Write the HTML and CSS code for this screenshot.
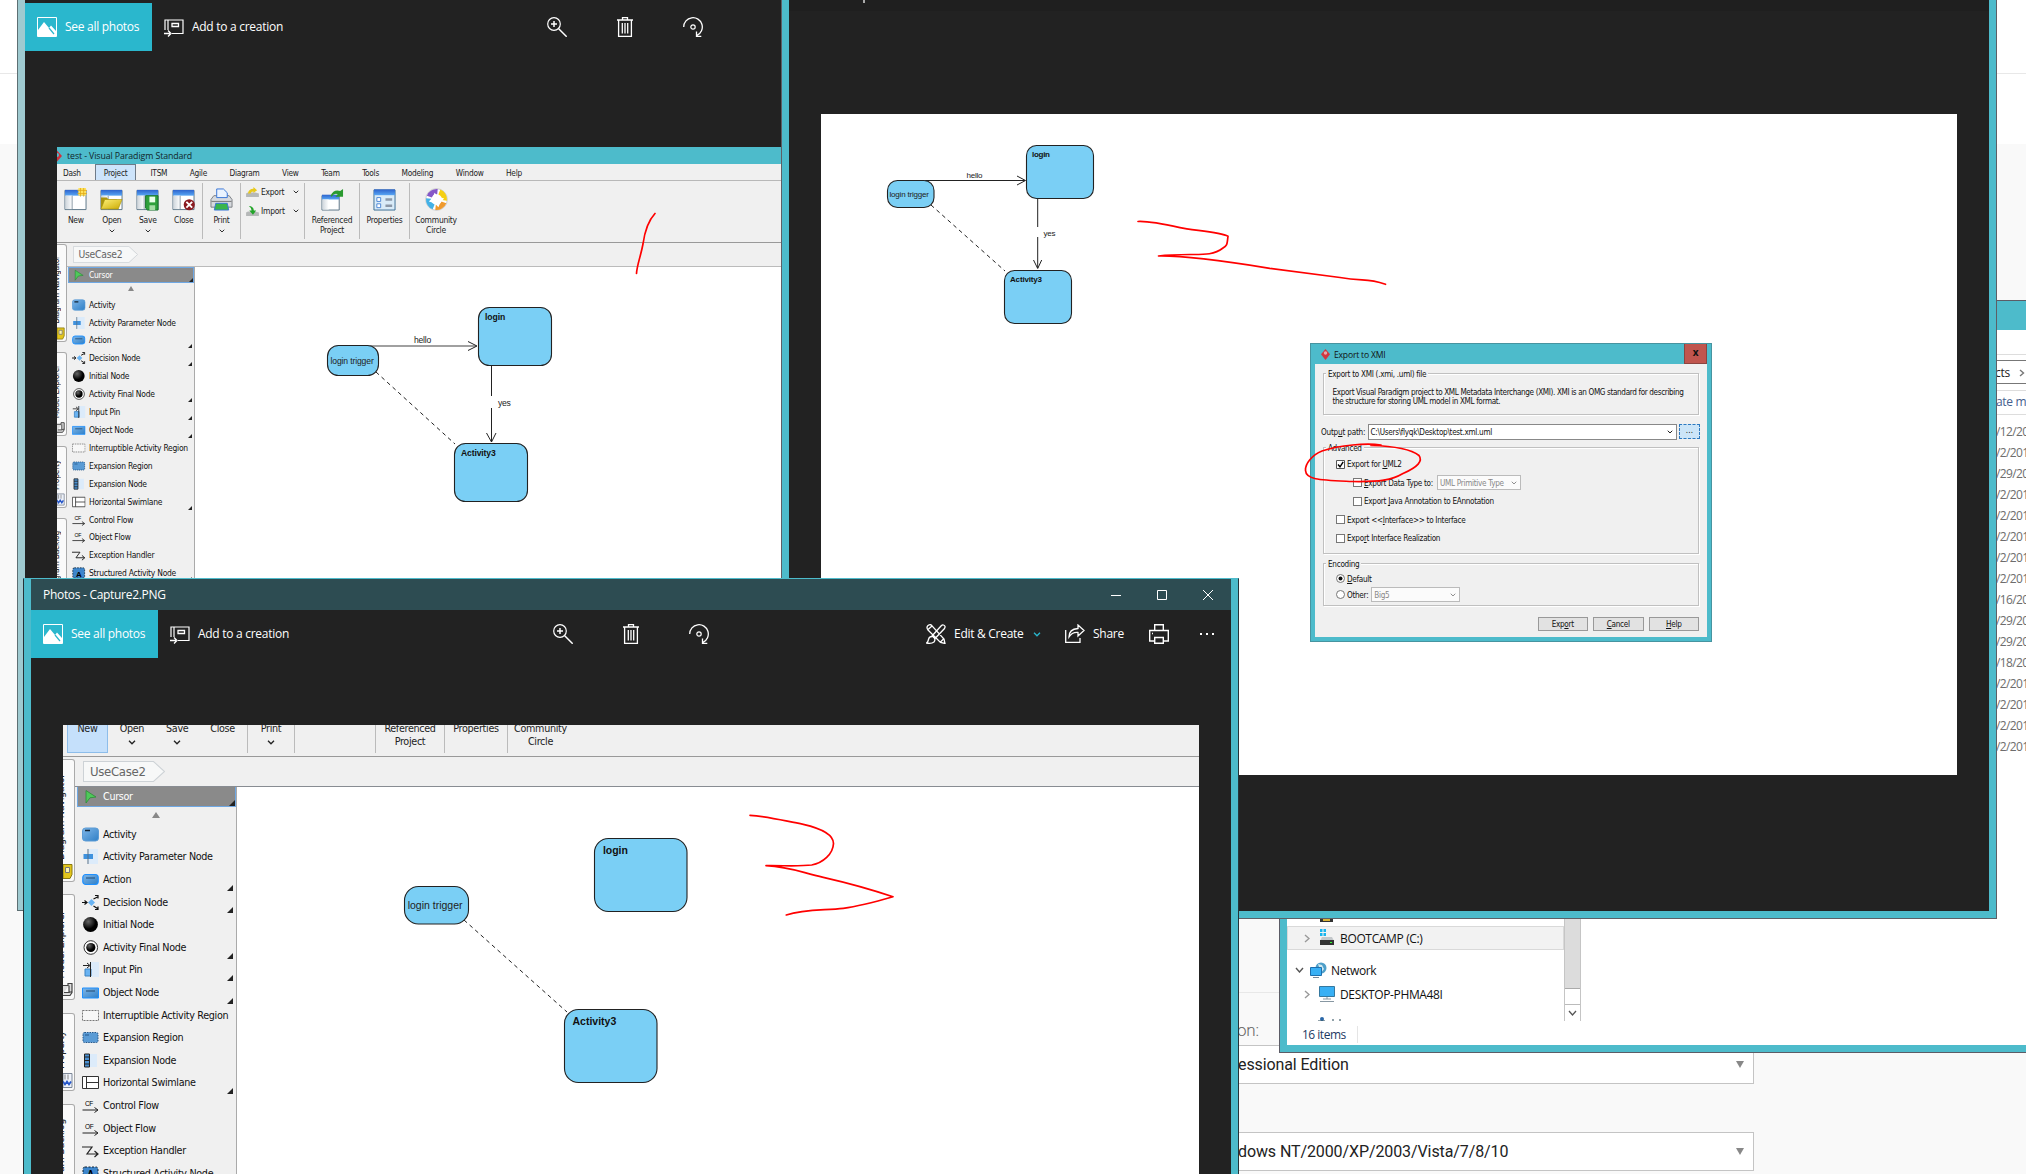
FILE: index.html
```html
<!DOCTYPE html>
<html lang="en">
<head>
<meta charset="utf-8">
<title>Desktop</title>
<link rel="stylesheet" href="styles.css">
</head>
<body>
<svg class="defs" width="0" height="0">
  <defs>
    <linearGradient id="blue" x1="0" y1="0" x2="1" y2="1"><stop offset="0" stop-color="#7fb6e8"/><stop offset="1" stop-color="#2f7fc6"/></linearGradient>
    <linearGradient id="bar" x1="0" y1="0" x2="0" y2="1"><stop offset="0" stop-color="#2d63cc"/><stop offset="1" stop-color="#58a6f4"/></linearGradient>
    <linearGradient id="pane" x1="0" y1="0" x2="1" y2="0"><stop offset="0" stop-color="#cfd6dc"/><stop offset="1" stop-color="#fff"/></linearGradient>
    <radialGradient id="ball" cx=".35" cy=".3"><stop offset="0" stop-color="#666"/><stop offset="1" stop-color="#000"/></radialGradient>
    <linearGradient id="gold" x1="0" y1="0" x2="1" y2="1"><stop offset="0" stop-color="#fff27a"/><stop offset="1" stop-color="#c9a800"/></linearGradient>
  </defs>
  <symbol id="i-photos" viewBox="0 0 20 20"><path d="M.5.5h19v19H.5z" fill="none" stroke="#fff"/><path d="M1 13l6-8 5 6 2-2.500 5 5.500v5H1z" fill="#fff"/><path d="M12 11l5 6" stroke="#2ab7cd" stroke-width="1.200"/></symbol>
  <symbol id="i-add" viewBox="0 0 20 20"><path d="M1 13V3h18v13.500H8M4 3v10" fill="none" stroke="#fff" stroke-width="1.200"/><path d="M8 6.500h6.500v3H8zM0 16.500h6M4 13.500l3 3-3 3" fill="none" stroke="#fff" stroke-width="1.300"/></symbol>
  <symbol id="i-zoom" viewBox="0 0 20 20"><path d="M4 7h6M7 4v6M11.700 11.700l8 8" stroke="#fff" stroke-width="1.500" fill="none"/><circle cx="7" cy="7" r="6.300" fill="none" stroke="#fff" stroke-width="1.200"/></symbol>
  <symbol id="i-trash" viewBox="0 0 20 20"><path d="M2 3h16M7.500 3V.7h5V3M3.600 3v16.300h12.800V3M7.300 6v10.500M10 6v10.500M12.700 6v10.500" fill="none" stroke="#fff" stroke-width="1.300"/></symbol>
  <symbol id="i-rotate" viewBox="0 0 20 20"><path d="M.7 10a9.300 9.300 0 1 1 13.300 8.400M13.500 14.500v4.800h4.800" fill="none" stroke="#fff" stroke-width="1.300"/><circle cx="10" cy="10" r="2.200" fill="none" stroke="#fff" stroke-width="1.200"/></symbol>
  <symbol id="i-edit" viewBox="0 0 20 20"><path d="M2 1.500q3-2 4.500 1L18 15l1 4.500-4.500-1L2 6Q0 3.500 2 1.500zM2 5.500L6 2M14.500 18l3-3M17.500 1q2.500 1 1 3.500L9 14.500 6 12l9-10q1.500-1.500 2.500-1zM6 12.500q-3 0-3.500 3-.5 2.500-2 3.500 5 1 7.500-1 1.500-2 .5-3.500" fill="none" stroke="#fff" stroke-width="1.300"/></symbol>
  <symbol id="i-share" viewBox="0 0 20 20"><path d="M.7 6v12.300H15V14M4 13q0-8 9-8.500V1l6 5.500-6 5.500V8.500Q7 8 4 13z" fill="none" stroke="#fff" stroke-width="1.300"/></symbol>
  <symbol id="i-print" viewBox="0 0 20 20"><path d="M5.700 6.500V.7h8.600v5.800M5 17H.7V6.500h18.600V17H15M5.700 13.500h8.600v5.800H5.700zM3 9.500h1" fill="none" stroke="#fff" stroke-width="1.400"/></symbol>
  <symbol id="i-chev" viewBox="0 0 8 5"><path d="M1 .8l3 3 3-3" fill="none" stroke="currentColor" stroke-width="1.300"/></symbol>

  <symbol id="r-win" viewBox="0 0 24 24"><path d="M1 2.500h22v20H1z" fill="#fff" stroke="#5b7486"/><path d="M1 2h22v6H1z" fill="url(#bar)"/><path d="M1.500 8h7v14h-7z" fill="url(#pane)"/><path d="M8.500 8v14" stroke="#8b9aa5"/></symbol>
  <symbol id="r-new" viewBox="0 0 24 24"><use href="#r-win"/><path d="M15 0h8v8h-8z" fill="#ffe25c"/><path d="M14 2.500h10M14 5.800h10M17.200 0v9M20.500 0v9" stroke="#e0a818" stroke-width=".8"/></symbol>
  <symbol id="r-open" viewBox="0 0 24 24"><use href="#r-win"/><path d="M1 21V10h6l2 2h9" fill="#a89410"/><path d="M5 12h18l-4 10H1z" fill="url(#gold)" stroke="#a08c00" stroke-width=".6"/></symbol>
  <symbol id="r-save" viewBox="0 0 24 24"><use href="#r-win"/><path d="M10 8h13v15H12l-2-2z" fill="#2fa03c" stroke="#14702a"/><path d="M14 9h6v6h-6z" fill="#eaffea"/><path d="M14 18h6v5h-6z" fill="#a5dca5"/></symbol>
  <symbol id="r-close" viewBox="0 0 24 24"><use href="#r-win"/><circle cx="18" cy="17.500" r="5.800" fill="#8a1a20"/><path d="M15 14.500l6 6M21 14.500l-6 6" stroke="#fff" stroke-width="2"/></symbol>
  <symbol id="r-print" viewBox="0 0 24 24"><path d="M4 8h16l3 4v8H1v-8z" fill="#d7dade" stroke="#7b8085"/><path d="M7 10V1h7l4 4v5z" fill="#eaf3ff" stroke="#3574d6"/><path d="M1.500 14h21" stroke="#777"/><path d="M6 16h12l1.500 7h-15z" fill="#39b54a" stroke="#3574d6"/></symbol>
  <symbol id="r-ref" viewBox="0 0 24 24"><path d="M1 8h18v15H1z" fill="#fff" stroke="#5b7486"/><path d="M1 7h18v5H1z" fill="url(#bar)"/><path d="M1.500 12H8v10.500H1.500z" fill="url(#pane)"/><path d="M10 8Q13 1 20 3l3-2v8h-8l2.500-2.500Q14 5 11 9z" fill="#2a9a30"/></symbol>
  <symbol id="r-prop" viewBox="0 0 24 24"><path d="M1 2h22v21H1z" fill="#d9ebf8" stroke="#3b6d94"/><path d="M1 1.500h22v6H1z" fill="url(#bar)"/><path d="M4 10h4v4H4zM4 16.500h4v4H4z" fill="#fff" stroke="#4b86d6"/><path d="M13 12h7M13 18.500h7" stroke="#8b98a8" stroke-width="2.500"/></symbol>
  <symbol id="r-comm" viewBox="0 0 24 24"><circle cx="12" cy="12" r="11.300" fill="#fff" stroke="#bbb" stroke-width=".8"/><g fill="none" stroke-width="5.500"><path d="M4.500 9A8.300 8.300 0 0 1 13 3.800" stroke="#8558c8"/><path d="M15 4.200A8.300 8.300 0 0 1 20.200 13" stroke="#f5cf12"/><path d="M19.700 15A8.300 8.300 0 0 1 11 20.200" stroke="#ef9a2e"/><path d="M9 19.700A8.300 8.300 0 0 1 3.800 11" stroke="#43b1e6"/></g><path d="M10 5l4 4 6 2-4 4-2 5-4-4-6-2 4-4z" fill="#fff"/></symbol>
  <symbol id="r-exp" viewBox="0 0 14 12"><path d="M0 7l2-1h8l4 1v4H0z" fill="#b5b8b8"/><path d="M2 7q1-5 6-5V0l4 3.500L8 6.500V5Q5 5 5 7z" fill="#e8c91c"/></symbol>
  <symbol id="r-imp" viewBox="0 0 14 12"><path d="M0 7l2-1h8l4 1v4H0z" fill="#b5b8b8"/><path d="M3 0q5 0 5.500 5H11L7.500 9.500 3.500 5H6Q6 2 3 0z" fill="#23a52a"/></symbol>

  <symbol id="p-cursor" viewBox="0 0 17 15"><path d="M4 1.500l10 6.500-6 .8L4 14z" fill="#4fc95a" stroke="#2c8c36" stroke-width=".8"/></symbol>
  <symbol id="p-activity" viewBox="0 0 17 15"><rect x=".5" y="1" width="16" height="13" rx="3" fill="url(#blue)" stroke="#5b9bd5"/><path d="M3 3.500h5" stroke="#123" stroke-width="1.500"/></symbol>
  <symbol id="p-param" viewBox="0 0 17 15"><path d="M7 0h9v15H7z" fill="#dcebfa"/><path d="M1.500 5h9.500v5H1.500z" fill="#3f92de"/><path d="M6 0v15" stroke="#53718c"/></symbol>
  <symbol id="p-action" viewBox="0 0 17 15"><rect x=".8" y="2.500" width="15.400" height="10" rx="3" fill="url(#blue)" stroke="#1e90ff" stroke-width="1.200"/><path d="M4 6h9" stroke="#234a70"/></symbol>
  <symbol id="p-decision" viewBox="0 0 17 15"><path d="M0 7.500h4M2.500 5.500l2.500 2-2.500 2M11.500 4l4-2M13 .5h3v3M11.500 11l4 2.500M13 14.500h3v-3" fill="none" stroke="#111" stroke-width="1.200"/><path d="M9.500 4l3.500 3.500L9.500 11 6 7.500z" fill="#69b3f2"/></symbol>
  <symbol id="p-initial" viewBox="0 0 17 15"><circle cx="8.500" cy="7.500" r="7.400" fill="url(#ball)"/></symbol>
  <symbol id="p-final" viewBox="0 0 17 15"><circle cx="8.800" cy="7.500" r="6.800" fill="#fff" stroke="#333"/><circle cx="8.800" cy="7.500" r="4.600" fill="url(#ball)"/></symbol>
  <symbol id="p-pin" viewBox="0 0 17 15"><path d="M8 0h9v15H8z" fill="#dcebfa"/><path d="M3 7h6v7H3z" fill="#69b3f2" stroke="#3c82c0"/><path d="M1 3.500h6M5 1l3 2.500L5 6M8.500 0v15" fill="none" stroke="#222"/></symbol>
  <symbol id="p-object" viewBox="0 0 17 15"><path d="M.5 3h16v10H.5z" fill="url(#blue)" stroke="#1e90ff"/><path d="M4 6h9" stroke="#234a70"/></symbol>
  <symbol id="p-region" viewBox="0 0 17 15"><path d="M.5 2.500h16v10H.5z" fill="#f7f7f7" stroke="#777" stroke-dasharray="2 1"/></symbol>
  <symbol id="p-expreg" viewBox="0 0 17 15"><rect x="1" y="2.500" width="15" height="10" rx="1.500" fill="#5a9bd5" stroke="#24568a" stroke-dasharray="1.500 1"/><path d="M3 5h4" stroke="#24568a"/></symbol>
  <symbol id="p-expnode" viewBox="0 0 17 15"><path d="M6 1h9v13H6z" fill="#dcebfa"/><path d="M2.500 1h5v13h-5z" fill="#4a90d2" stroke="#222"/><path d="M2.500 4h5M2.500 7.500h5M2.500 11h5" stroke="#222"/></symbol>
  <symbol id="p-swim" viewBox="0 0 17 15"><path d="M.5 1.500h16v12H.5zM4.500 1.500v12M4.500 7.500h12" fill="#fff" stroke="#333"/></symbol>
  <symbol id="p-flow" viewBox="0 0 17 15"><path d="M.5 12h15M12.500 9.500l3.500 2.500-3.500 2.500" fill="none" stroke="#222"/></symbol>
  <symbol id="p-exc" viewBox="0 0 17 15"><path d="M0 4h10L5 11h11M12.500 8l3.500 3-3.500 3" fill="none" stroke="#222" stroke-width="1.200"/></symbol>
  <symbol id="p-struct" viewBox="0 0 17 15"><rect x="1" y="1" width="15" height="13" rx="2" fill="#3d86cc" stroke="#123" stroke-dasharray="2 1.500"/></symbol>
  <symbol id="t-diagram" viewBox="0 0 10 16"><path d="M0 1h9v10l-2 4H0z" fill="#e3c51b" stroke="#8a7a10"/><path d="M2.500 4h4v5h-4z" fill="#fff7b0" stroke="#777"/></symbol>
  <symbol id="t-model" viewBox="0 0 10 16"><path d="M0 4h5V2h4v9l-2 3H0M1 11h5V4M6 11l3-1" fill="#ddd" stroke="#444" stroke-width="1.200"/></symbol>
  <symbol id="t-prop" viewBox="0 0 10 16"><path d="M0 1h9v14H0z" fill="#eef2fa" stroke="#7c8797"/><path d="M2 2v5M5 2v5" stroke="#888"/><path d="M0 9l2 3 2-3 2 3 2-3" fill="none" stroke="#2656c8" stroke-width="1.800"/></symbol>
</svg>

<div class="desktop">
  <main class="site">
    <div class="site-head"></div>
    <div class="site-nav"></div>
    <form class="site-form">
      <div class="site-rule"></div>
      <label class="site-label">on:</label>
      <div class="site-select">essional Edition<i></i></div>
      <div class="site-select site-second">dows NT/2000/XP/2003/Vista/7/8/10<i></i></div>
    </form>
  </main>

  <section class="win explorer">
    <div class="ex-title"></div>
    <div class="ex-tabs"></div>
    <div class="ex-addr"><span>cts</span><svg width="6" height="8"><path d="M1 1l3.500 3L1 7" fill="none" stroke="#777" stroke-width="1.400"/></svg></div>
    <div class="ex-body">
      <div class="ex-tree">
        <svg class="ex-video" width="13" height="5"><path d="M0 0h13v4H0z" fill="#333"/><path d="M3 0h7v3H3z" fill="#d9b43a"/></svg>
        <div class="ex-row ex-sel"><svg class="tw" width="6" height="9"><path d="M1 1l4 3.500-4 3.500" fill="none" stroke="#999" stroke-width="1.400"/></svg><svg width="16" height="20"><path d="M1 1h2.500v3H1zM4.500 1H7v3H4.500zM1 5h2.500v3H1zM4.500 5H7v3H4.500z" fill="#19b5ee"/><path d="M3 9h10l2 4H1z" fill="#c4c8cb"/><path d="M1 12h14v5H1z" fill="#333"/><path d="M11 14.500h2" stroke="#3f3"/></svg><span>BOOTCAMP (C:)</span></div>
        <div class="ex-row ex-net"><svg class="tw" width="9" height="6"><path d="M1 1l3.500 4L8 1" fill="none" stroke="#555" stroke-width="1.400"/></svg><svg width="17" height="16"><circle cx="11" cy="6" r="5.500" fill="#4e9fc9"/><path d="M8 2l4 1 2 4-3 4" fill="#cfe8ef"/><path d="M.5 5.500h11v8H.5z" fill="#38b0f5" stroke="#1d6fae"/><path d="M3 15.500h6" stroke="#789"/></svg><span>Network</span></div>
        <div class="ex-row ex-pc"><svg class="tw" width="6" height="9"><path d="M1 1l4 3.500-4 3.500" fill="none" stroke="#999" stroke-width="1.400"/></svg><svg width="16" height="16"><path d="M.5.500h15v10H.5z" fill="#38b0f5" stroke="#35789f"/><path d="M8 11v2M4 13h8M1 15.500h14" stroke="#8797a2"/></svg><span>DESKTOP-PHMA48I</span></div>
        <svg class="ex-cut" width="24" height="4"><circle cx="4" cy="2" r="2" fill="#2a67a8"/><path d="M0 4h7M14 3h2M21 3h2" stroke="#245"/></svg>
      </div>
      <div class="ex-scroll"><div class="thumb"></div><div class="gap"></div><div class="down"><svg width="9" height="6"><path d="M1 1l3.500 4L8 1" fill="none" stroke="#555" stroke-width="1.300"/></svg></div></div>
      <div class="ex-files">
        <div class="ex-col">ate m</div>
        <div>/12/20</div><div>/2/201</div><div>/29/20</div><div>/2/201</div><div>/2/201</div><div>/2/201</div><div>/2/201</div><div>/2/201</div><div>/16/20</div><div>/29/20</div><div>/29/20</div><div>/18/20</div><div>/2/201</div><div>/2/201</div><div>/2/201</div><div>/2/201</div>
      </div>
    </div>
    <div class="ex-status"><span>16 items</span></div>
  </section>

  <section class="win photos-a">
    <div class="ph-bar">
      <div class="ph-all"><svg width="20" height="20"><use href="#i-photos"/></svg><span>See all photos</span></div>
      <div class="ph-add"><svg width="20" height="20"><use href="#i-add"/></svg><span>Add to a creation</span></div>
      <div class="ph-mid"><svg width="20" height="20"><use href="#i-zoom"/></svg><svg width="20" height="20"><use href="#i-trash"/></svg><svg width="20" height="20"><use href="#i-rotate"/></svg></div>
    </div>
    <div class="shot vp vp-a">
      <div class="vp-title"><svg width="6" height="12"><path d="M-5 6l5-5.500L5 6 0 11.500z" fill="#d22f3a"/><circle cx="0" cy="5" r="2" fill="#4dbbcb"/></svg><span>test - Visual Paradigm Standard</span></div>
      <nav class="vp-menu"><span>Dash</span><span class="on">Project</span><span>ITSM</span><span>Agile</span><span>Diagram</span><span>View</span><span>Team</span><span>Tools</span><span>Modeling</span><span>Window</span><span>Help</span></nav>
      <div class="vp-ribbon">
        <div class="grp g4">
          <div class="rb"><svg><use href="#r-new"/></svg>New</div>
          <div class="rb"><svg><use href="#r-open"/></svg>Open<svg class="cv"><use href="#i-chev"/></svg></div>
          <div class="rb"><svg><use href="#r-save"/></svg>Save<svg class="cv"><use href="#i-chev"/></svg></div>
          <div class="rb"><svg><use href="#r-close"/></svg>Close</div>
        </div>
        <div class="grp gp"><div class="rb"><svg><use href="#r-print"/></svg>Print<svg class="cv"><use href="#i-chev"/></svg></div></div>
        <div class="grp gx"><div class="rl"><svg><use href="#r-exp"/></svg>Export<svg class="cv"><use href="#i-chev"/></svg></div><div class="rl"><svg><use href="#r-imp"/></svg>Import<svg class="cv"><use href="#i-chev"/></svg></div></div>
        <div class="grp gr"><div class="rb"><svg><use href="#r-ref"/></svg>Referenced<br>Project</div></div>
        <div class="grp go"><div class="rb"><svg><use href="#r-prop"/></svg>Properties</div></div>
        <div class="grp gc"><div class="rb"><svg><use href="#r-comm"/></svg>Community<br>Circle</div></div>
      </div>
      <div class="vp-main">
        <div class="vp-tabs">
          <div class="tab t1"><span>Diagram Navigator</span><svg><use href="#t-diagram"/></svg></div>
          <div class="tab t2"><span>Model Explorer</span><svg><use href="#t-model"/></svg></div>
          <div class="tab t3"><span>Property</span><svg><use href="#t-prop"/></svg></div>
          <div class="tab t4"><span>Diagram Backlog</span></div>
        </div>
        <div class="vp-work">
          <div class="vp-crumb"><svg viewBox="0 0 82 20" preserveAspectRatio="none"><path d="M.5.500h70l11 9.500-11 9.500H.5z" fill="#f7f8f8" stroke="#cdd2d6"/></svg><span>UseCase2</span></div>
          <div class="vp-split">
            <div class="vp-pal">
              <div class="pr cur more"><svg><use href="#p-cursor"/></svg>Cursor</div>
              <div class="up"></div>
              <div class="pr"><svg><use href="#p-activity"/></svg>Activity</div>
              <div class="pr"><svg><use href="#p-param"/></svg>Activity Parameter Node</div>
              <div class="pr more"><svg><use href="#p-action"/></svg>Action</div>
              <div class="pr more"><svg><use href="#p-decision"/></svg>Decision Node</div>
              <div class="pr"><svg><use href="#p-initial"/></svg>Initial Node</div>
              <div class="pr more"><svg><use href="#p-final"/></svg>Activity Final Node</div>
              <div class="pr more"><svg><use href="#p-pin"/></svg>Input Pin</div>
              <div class="pr more"><svg><use href="#p-object"/></svg>Object Node</div>
              <div class="pr"><svg><use href="#p-region"/></svg>Interruptible Activity Region</div>
              <div class="pr"><svg><use href="#p-expreg"/></svg>Expansion Region</div>
              <div class="pr"><svg><use href="#p-expnode"/></svg>Expansion Node</div>
              <div class="pr more"><svg><use href="#p-swim"/></svg>Horizontal Swimlane</div>
              <div class="pr"><svg viewBox="0 0 17 15"><use href="#p-flow"/><text class="fl" x="3" y="8">CF</text></svg>Control Flow</div>
              <div class="pr"><svg viewBox="0 0 17 15"><use href="#p-flow"/><text class="fl" x="3" y="8">OF</text></svg>Object Flow</div>
              <div class="pr"><svg><use href="#p-exc"/></svg>Exception Handler</div>
              <div class="pr more"><svg viewBox="0 0 17 15"><use href="#p-struct"/><text class="st" x="5" y="12">A</text></svg>Structured Activity Node</div>
            </div>
            <svg class="canvas" viewBox="195 267 586 312" width="586" height="312">
              <path d="M370 346H476" stroke="#a0a0a0" stroke-width="2"/>
              <path d="M468 341.500l9 4.500-9 4.500M491.500 365v31M491.500 408v34M486.500 433l5 9 4.500-9" class="ln"/>
              <path d="M376 372L455 444" class="ln dash"/>
              <rect x="327.500" y="345.500" width="51" height="30" rx="11" class="nd"/><rect x="478.500" y="307.500" width="73" height="58" rx="11" class="nd"/><rect x="454.500" y="443.500" width="73" height="58" rx="11" class="nd"/>
              <g class="dt" font-size="8.600"><text x="330.500" y="363.500" textLength="43">login trigger</text><text x="414" y="343" textLength="17">hello</text><text x="498" y="405.500" textLength="12.500">yes</text><text x="485" y="320" textLength="20" class="b">login</text><text x="461" y="455.500" textLength="34.500" class="b">Activity3</text></g>
            </svg>
          </div>
        </div>
      </div>
    </div>
    <svg class="ink-a" viewBox="600 200 100 80" width="100" height="80"><path d="M655 213.500C648 221 644.500 233 643 244 C640.500 257 637 265 636.500 273.500" class="red"/></svg>
  </section>

  <section class="win photos-b">
    <div class="b-bar"><i></i></div>
    <div class="shot shot-b">
      <div class="dialog">
        <header><svg width="9" height="11" viewBox="0 0 9 11"><path d="M4.500 0L9 5.200 4.500 11 0 5.200z" fill="#cf3640"/><circle cx="4.500" cy="4" r="1.700" fill="#e9a7ab"/></svg><span class="d-name">Export to XMI</span><b>x</b></header>
        <div class="dbody">
          <div class="fs f1"><span class="lg">Export to XMI (.xmi, .uml) file</span><p>Export Visual Paradigm project to XML Metadata Interchange (XMI). XMI is an OMG standard for describing<br>the structure for storing UML model in XML format.</p></div>
          <div class="out"><span>Outp<u>u</u>t path:</span><div class="inp">C:\Users\flyqk\Desktop\test.xml.uml<svg width="6" height="4"><use href="#i-chev"/></svg></div><div class="dots">...</div></div>
          <div class="fs f2"><span class="lg">Advanced</span>
            <div class="ck"><svg width="9" height="9"><path d="M.5.500h8v8h-8z" fill="#fff" stroke="#555"/><path d="M2 4.500l2 2.300 3.200-5" fill="none" stroke="#000" stroke-width="1.400"/></svg><span>Export for <u>U</u>ML2</span></div>
            <div class="ck in"><i></i><span><u>E</u>xport Data Type to:</span><div class="sel s1">UML Primitive Type<svg width="6" height="4"><use href="#i-chev"/></svg></div></div>
            <div class="ck in"><i></i><span>Export <u>J</u>ava Annotation to EAnnotation</span></div>
            <div class="ck"><i></i><span>Export &lt;&lt;<u>I</u>nterface&gt;&gt; to Interface</span></div>
            <div class="ck"><i></i><span>Expo<u>r</u>t Interface Realization</span></div>
          </div>
          <div class="fs f3"><span class="lg">Encoding</span>
            <div class="rd"><svg width="9" height="9"><circle cx="4.500" cy="4.500" r="4" fill="#fff" stroke="#777"/><circle cx="4.500" cy="4.500" r="2" fill="#111"/></svg><span><u>D</u>efault</span></div>
            <div class="rd"><svg width="9" height="9"><circle cx="4.500" cy="4.500" r="4" fill="#fff" stroke="#777"/></svg><span>Other:</span><div class="sel s2">Big5<svg width="6" height="4"><use href="#i-chev"/></svg></div></div>
          </div>
          <div class="btns"><div>Exp<u>o</u>rt</div><div><u>C</u>ancel</div><div><u>H</u>elp</div></div>
        </div>
      </div>
      <svg class="over" viewBox="821 114 1136 661" width="1136" height="661">
        <path d="M925 180.500H1025M1017 176l8.500 4.500-8.500 4.500M1037.700 198v29M1037.700 237v31M1033.500 260l4.200 8.500 4-8.500" class="ln"/>
        <path d="M931 205L1005 271" class="ln dash"/>
        <rect x="887.500" y="180.500" width="46.500" height="27" rx="10" class="nd"/><rect x="1026.500" y="145.500" width="67" height="53" rx="10" class="nd"/><rect x="1004.500" y="270.500" width="67" height="53" rx="10" class="nd"/>
        <g class="dt" font-size="8"><text x="889.500" y="196.500" textLength="39.500">login trigger</text><text x="966.500" y="178" textLength="16">hello</text><text x="1043.500" y="235.500" textLength="12">yes</text><text x="1032" y="156.500" textLength="18" class="b">login</text><text x="1010" y="281.500" textLength="32" class="b">Activity3</text></g>
        <path d="M1138 221.500C1148 221 1168 225 1180 227.700S1220 232 1228 236.300C1227 243 1228 245 1223 248C1214 255 1204 254.500 1190 254.500Q1170 254.500 1158.500 256C1180 255.500 1230 262 1269.800 268.300L1340 277.500Q1350 279.500 1362 279.800 T1385.500 284.300" class="red"/>
        <path d="M1381 445C1366 443 1340 445 1322 451 C1312 455 1305 464 1305.500 470.500C1306 480 1320 480 1352 481.500 C1380 482 1392 480 1403 473.500 C1418 467 1423 461 1419 455.500 C1411 449 1390 446 1371 445.500" class="red"/>
      </svg>
    </div>
  </section>

  <section class="win photos-c">
    <header class="ph-title"><span>Photos - Capture2.PNG</span>
      <svg width="102" height="10"><path d="M0 5.500h10M46.500.500h9v9h-9zM92 0l10 10M102 0l-10 10" fill="none" stroke="#fff"/></svg></header>
    <div class="ph-bar">
      <div class="ph-all"><svg width="20" height="20"><use href="#i-photos"/></svg><span>See all photos</span></div>
      <div class="ph-add"><svg width="20" height="20"><use href="#i-add"/></svg><span>Add to a creation</span></div>
      <div class="ph-mid"><svg width="20" height="20"><use href="#i-zoom"/></svg><svg width="20" height="20"><use href="#i-trash"/></svg><svg width="20" height="20"><use href="#i-rotate"/></svg></div>
      <div class="ph-right"><svg width="20" height="20"><use href="#i-edit"/></svg><span class="e">Edit &amp; Create</span><svg class="pc" width="8" height="5"><use href="#i-chev"/></svg><svg width="20" height="20"><use href="#i-share"/></svg><span class="s">Share</span><svg class="pp" width="20" height="20"><use href="#i-print"/></svg><svg width="14" height="2"><path d="M0 0h2v2H0zM6 0h2v2H6zM12 0h2v2h-2z" fill="#fff"/></svg></div>
    </div>
    <div class="shot vp vp-c">
      <div class="vp-ribbon">
        <div class="grp g4">
          <div class="rb hot">New</div>
          <div class="rb">Open<svg class="cv"><use href="#i-chev"/></svg></div>
          <div class="rb">Save<svg class="cv"><use href="#i-chev"/></svg></div>
          <div class="rb">Close</div>
        </div>
        <div class="grp gp"><div class="rb">Print<svg class="cv"><use href="#i-chev"/></svg></div></div>
        <div class="grp gx"></div>
        <div class="grp gr"><div class="rb">Referenced<br>Project</div></div>
        <div class="grp go"><div class="rb">Properties</div></div>
        <div class="grp gc"><div class="rb">Community<br>Circle</div></div>
      </div>
      <div class="vp-main">
        <div class="vp-tabs">
          <div class="tab t1"><span>Diagram Navigator</span><svg><use href="#t-diagram"/></svg></div>
          <div class="tab t2"><span>Model Explorer</span><svg><use href="#t-model"/></svg></div>
          <div class="tab t3"><span>Property</span><svg><use href="#t-prop"/></svg></div>
          <div class="tab t4"><span>Diagram Backlog</span></div>
        </div>
        <div class="vp-work">
          <div class="vp-crumb"><svg viewBox="0 0 82 20" preserveAspectRatio="none"><path d="M.5.500h70l11 9.500-11 9.500H.5z" fill="#f7f8f8" stroke="#cdd2d6"/></svg><span>UseCase2</span></div>
          <div class="vp-split">
            <div class="vp-pal">
              <div class="pr cur more"><svg><use href="#p-cursor"/></svg>Cursor</div>
              <div class="up"></div>
              <div class="pr"><svg><use href="#p-activity"/></svg>Activity</div>
              <div class="pr"><svg><use href="#p-param"/></svg>Activity Parameter Node</div>
              <div class="pr more"><svg><use href="#p-action"/></svg>Action</div>
              <div class="pr more"><svg><use href="#p-decision"/></svg>Decision Node</div>
              <div class="pr"><svg><use href="#p-initial"/></svg>Initial Node</div>
              <div class="pr more"><svg><use href="#p-final"/></svg>Activity Final Node</div>
              <div class="pr more"><svg><use href="#p-pin"/></svg>Input Pin</div>
              <div class="pr more"><svg><use href="#p-object"/></svg>Object Node</div>
              <div class="pr"><svg><use href="#p-region"/></svg>Interruptible Activity Region</div>
              <div class="pr"><svg><use href="#p-expreg"/></svg>Expansion Region</div>
              <div class="pr"><svg><use href="#p-expnode"/></svg>Expansion Node</div>
              <div class="pr more"><svg><use href="#p-swim"/></svg>Horizontal Swimlane</div>
              <div class="pr"><svg viewBox="0 0 17 15"><use href="#p-flow"/><text class="fl" x="3" y="8">CF</text></svg>Control Flow</div>
              <div class="pr"><svg viewBox="0 0 17 15"><use href="#p-flow"/><text class="fl" x="3" y="8">OF</text></svg>Object Flow</div>
              <div class="pr"><svg><use href="#p-exc"/></svg>Exception Handler</div>
              <div class="pr more"><svg viewBox="0 0 17 15"><use href="#p-struct"/><text class="st" x="5" y="12">A</text></svg>Structured Activity Node</div>
            </div>
            <svg class="canvas" viewBox="237 787 962 387" width="962" height="387">
              <path d="M464 920L567 1012" class="ln dash"/>
              <rect x="404.500" y="886.500" width="64" height="37.500" rx="14" class="nd"/><rect x="594.500" y="838.500" width="92.500" height="73" rx="14" class="nd"/><rect x="564.500" y="1009.500" width="92.500" height="73" rx="14" class="nd"/>
              <g class="dt" font-size="10.500"><text x="407.700" y="908.500" textLength="54.500">login trigger</text><text x="603" y="854" textLength="24.500" class="b">login</text><text x="572.500" y="1025" textLength="43.500" class="b">Activity3</text></g>
              <path d="M750 815.300C768 816.500 785 821 803.300 824.300C815 827 833.500 832 833.500 843.500C833 854 823 863 811.700 865C800 866.500 785 865.500 766 865.700C790 867 800 872 823.300 877.300S870 889 893 896.700C878 901 860 906 843.300 908.300C825 910.500 805 909 786.300 915" class="red"/>
            </svg>
          </div>
        </div>
      </div>
    </div>
  </section>
</div>
</body>
</html>
```
FILE: styles.css
```css
* { box-sizing: border-box; }
body { margin: 0; font-family: "Open Sans", "Noto Sans", sans-serif; }
svg { display: block; flex: none; }
.defs { position: absolute; }
.desktop { position: relative; width: 2026px; height: 1174px; overflow: hidden; background: #f9f9f9; }
.win { position: absolute; overflow: hidden; }

/* web page behind the windows */
.site-head { height: 74px; background: #fff; border-bottom: 1px solid #e8e8e8; }
.site-nav { height: 70px; background: #fff; }
.site-form { margin-left: 1238px; width: 516px; padding-top: 848px; font-family: Roboto, sans-serif; }
.site-rule { border-top: 1px solid #e8e8e8; height: 20px; }
.site-label { display: block; height: 33px; line-height: 36px; font-size: 17px; color: #666; font-weight: 300; margin-left: -1px; letter-spacing: -.2px; }
.site-select { display: flex; align-items: center; height: 39px; border: 1px solid #c4c4c4; border-left: 0; background: #fff; font-size: 16px; color: #222; white-space: nowrap; letter-spacing: -.1px; }
.site-select i { margin-left: auto; margin-right: 9px; border: 4.500px solid transparent; border-top: 7px solid #888; border-bottom: 0; }
.site-second { margin-top: 48px; }

/* file explorer */
.explorer { left: 1279px; top: 300px; width: 760px; height: 753px; border: 1px solid #5c5c66; border-width: 1px 0 1px 1px; background: #4dbbcb; padding: 0 0 7px 7px; font-size: 12px; display: flex; flex-direction: column; }
.ex-title { height: 29px; }
.ex-tabs { height: 25px; background: #fff; border-bottom: 1px solid #ddd; }
.ex-addr { display: flex; align-items: center; gap: 9px; height: 36px; background: #fff; padding-left: 708px; color: #222; border-bottom: 1px solid #ddd; box-shadow: inset 0 5px #fff, inset 0 6px #777, inset 0 -6px #fff, inset 0 -7px #777; letter-spacing: -.3px; }
.ex-body { flex: 1; display: flex; background: #fff; min-height: 0; }
.ex-tree { width: 277px; padding-top: 527px; letter-spacing: -.35px; overflow: hidden; }
.ex-video { margin-left: 33px; }
.ex-row { display: flex; align-items: center; gap: 5px; height: 24px; white-space: nowrap; color: #111; }
.ex-sel { margin-top: 3px; border: 1px solid #d9d9d9; background: #f2f2f2; padding-left: 16px; }
.ex-row .tw { margin-right: 4px; }
.ex-net { margin-top: 8px; padding-left: 8px; gap: 4px; }
.ex-net .tw { margin-right: 2px; }
.ex-pc { padding-left: 17px; }
.ex-cut { margin: 11px 0 0 31px; }
.ex-scroll { width: 17px; display: flex; flex-direction: column; border: 1px solid #c5c5c5; border-width: 0 1px 1px; background: #fff; height: 631px; }
.thumb { flex: 1; background: #dcdcdc; border-bottom: 1px solid #aaa; }
.gap { height: 15px; }
.down { height: 17px; border-top: 1px solid #bbb; display: flex; align-items: center; justify-content: center; }
.ex-files { padding-left: 414px; color: #6d6d6d; line-height: 21.030px; white-space: nowrap; }
.ex-files > div { padding-left: 1px; letter-spacing: -.65px; }
.ex-files .ex-col { color: #44608e; height: 24px; border-bottom: 1px solid #ddd; margin-bottom: 6px; padding-left: 1px; letter-spacing: -.3px; }
.ex-status { background: #fff; height: 24px; padding: 5px 0 0 15px; color: #1d3a63; line-height: 17px; letter-spacing: -.5px; }
.ex-status span { border-right: 1px solid #e5e5e5; padding-right: 11px; }

/* photo viewer windows */
.photos-a { left: 17px; top: -1px; width: 764px; height: 912px; border: 1px solid #5d6f73; border-right: 0; background: #222; box-shadow: inset 7px 0 #9fcad0, inset 0 -7px #9fcad0; padding: 3px 0 0 7px; }
.photos-b { left: 781px; top: -1px; width: 1216px; height: 920px; border: 1px solid #5d5f66; background: #222; box-shadow: inset 7px 0 #4dbbcb, inset -7px 0 #4dbbcb, inset 0 -7px #4dbbcb; padding: 0 7px; }
.photos-c { left: 23px; top: 578px; width: 1216px; height: 620px; border: 1px solid #253338; border-top: 1px solid #4dbbcb; background: #222; padding: 0 7px; box-shadow: inset 7px 0 #4dbbcb, inset -7px 0 #4dbbcb; }
.b-bar { height: 11px; background: #1f1f1f; padding-left: 74px; }
.b-bar i { display: block; width: 2px; height: 3px; background: #aaa; }
.ph-title { display: flex; justify-content: space-between; align-items: center; height: 31px; background: #2d4c52; color: #fff; font-size: 12px; letter-spacing: -.3px; padding: 0 18px 0 12px; }
.ph-bar { display: flex; align-items: center; height: 48px; color: #fff; font-size: 12px; letter-spacing: -.28px; white-space: nowrap; }
.ph-bar > div { display: flex; align-items: center; }
.ph-bar span { margin-top: -1px; }
.ph-all { width: 127px; height: 48px; background: #2ab7cd; padding-left: 12px; gap: 8px; }
.ph-add { padding-left: 12px; gap: 8px; width: 395px; }
.ph-mid { gap: 48px; }
.ph-right { margin-left: auto; padding-right: 17px; }
.ph-right .e { margin-left: 8px; width: 79px; }
.ph-right .pc { color: #2ab7cd; margin-right: 24px; }
.ph-right .s { margin-left: 8px; width: 56px; }
.ph-right .pp { margin-right: 31px; }
.shot { overflow: hidden; background: #fff; }
.shot-b { position: relative; margin: 103px 0 0 32px; width: 1136px; height: 661px; }
.over { position: absolute; left: 0; top: 0; }
.ink-a { position: absolute; left: 582px; top: 200px; }

/* diagrams */
.nd { fill: #7acff5; stroke: #222; stroke-width: 1.100; }
.ln { fill: none; stroke: #222; }
.dash { stroke-dasharray: 4 3.500; }
.dt { font-family: "Liberation Sans", sans-serif; fill: #222; }
.dt .b { font-weight: bold; fill: #111; }
.red { fill: none; stroke: #f00; stroke-width: 1.700; stroke-linecap: round; stroke-linejoin: round; }

/* modelling tool capture */
.vp { font-family: "DejaVu Sans Condensed", "DejaVu Sans", sans-serif; font-stretch: condensed; background: #f0f0f0; color: #222; white-space: nowrap; display: flex; flex-direction: column; letter-spacing: -.03em; }
.vp-a { font-size: 8.450px; margin: 96px 0 0 32px; width: 724px; height: 432px; }
.vp-c { font-size: 10.700px; margin: 67px 0 0 32px; width: 1136px; height: 450px; }
.vp-title { height: 17px; background: #4dbbcb; display: flex; align-items: center; gap: 4px; font: 8.800px "Open Sans", sans-serif; letter-spacing: -.1px; color: #12262a; }
.vp-menu { height: 17px; display: flex; align-items: stretch; padding-left: 6px; border-bottom: 1px solid #b8b8b8; line-height: 19px; font-size: 8.250px; }
.vp-menu span { padding: 0 11.250px; }
.vp-menu span:first-child { padding-left: 0; padding-right: 14px; }
.vp-menu .on { background: #cde4fb; border: 1px solid #6f7b88; border-bottom: 0; padding: 0 8px; margin-right: 2px; line-height: 17px; }
.vp-menu .on + span { padding-left: 12px; }
.vp-ribbon { display: flex; padding-top: 2px; border-bottom: 1px solid #999; height: 62px; flex: none; }
.grp { display: flex; border-right: 1px solid #bbb; height: 56px; flex: none; }
.grp:last-child { border: 0; }
.rb { flex: 1; display: flex; flex-direction: column; align-items: center; text-align: center; line-height: 10.500px; padding-top: 5px; }
.g4 .rb { flex: none; width: 36px; }
.rb svg { width: 23px; height: 23px; margin-bottom: 3.500px; }
.vp .cv { width: 6px; height: 4px; margin: 3.500px 0 0; }
.g4 { width: 146px; padding-left: .8px; } .gp { width: 38px; } .gx { width: 64px; flex-direction: column; padding: 3px 5px; gap: 7px; } .gr { width: 55px; } .go { width: 50px; } .gc { width: 52px; }
.rl { display: flex; align-items: center; gap: 2px; height: 12px; }
.rl svg { width: 13px; height: 11px; }
.vp .rl .cv { margin: 0 0 0 auto; }
.vp-c .vp-ribbon { height: 32px; padding: 0; }
.vp-c .grp { height: 28px; }
.vp-c .rb { line-height: 13px; padding-top: 0; margin-top: -3.500px; }
.vp-c .g4 .rb { width: 45.300px; }
.vp-c .cv { width: 8px; height: 5px; margin-top: 5px; }
.vp-c .g4 .hot { background: #c5e0fb; border: 1px solid #8dbdea; width: 41px; margin: -4.500px 1.300px 0 3px; }
.vp-c .g4 { width: 185px; padding-left: 1px; } .vp-c .gp { width: 47px; } .vp-c .gx { width: 81px; } .vp-c .gr { width: 69px; } .vp-c .go { width: 63px; } .vp-c .gc { width: 65px; }
.vp-main { display: flex; flex: 1; min-height: 0; }
.vp-tabs { width: 10px; flex: none; padding-top: 1px; display: flex; flex-direction: column; gap: 10px; }
.vp-c .vp-tabs { width: 12px; padding-top: 2px; gap: 12.700px; }
.tab { background: #fafafa; border: 1px solid #aaa; border-left: 0; border-radius: 0 3px 3px 0; flex: none; display: flex; flex-direction: column; align-items: flex-start; justify-content: flex-end; overflow: hidden; }
.tab span { writing-mode: vertical-rl; transform: rotate(180deg); margin-left: -6px; line-height: 10px; width: 10px; margin-bottom: 3px; }
.tab svg { width: 8px; height: 13px; margin-bottom: 1px; }
.t1 { height: 98px; } .t2 { height: 84px; } .t3 { height: 62px; } .t4 { height: 90px; justify-content: flex-start; padding-top: 12px; }
.vp-c .tab span { margin-left: -9px; line-height: 14px; width: 14px; }
.vp-c .tab svg { width: 10px; height: 17px; }
.vp-c .t1 { height: 122.500px; } .vp-c .t2 { height: 106px; } .vp-c .t3 { height: 78.500px; } .vp-c .t4 { height: 120px; padding-top: 14px; }
.vp-work { flex: 1; min-width: 0; display: flex; flex-direction: column; }
.vp-crumb { height: 24px; flex: none; border-bottom: 1px solid #bbb; padding: 2.500px 0 0 5.500px; color: #666; font-size: 1.220em; display: grid; justify-content: start; }
.vp-crumb svg { width: 65px; height: 17px; grid-area: 1/1; }
.vp-crumb span { grid-area: 1/1; padding-left: 6px; line-height: 17px; }
.vp-c .vp-crumb { height: 30px; border-color: #888c92; padding: 4px 0 0 8px; }
.vp-c .vp-crumb svg { width: 82px; height: 21px; }
.vp-c .vp-crumb span { padding-left: 7px; line-height: 22px; }
.vp-split { display: flex; flex: 1; min-height: 0; overflow: hidden; }
.vp-pal { width: 128px; flex: none; border-right: 1px solid #aaa; }
.vp-c .vp-pal { width: 162px; }
.canvas { background: #fff; }
.pr { display: flex; align-items: center; height: 17.910px; padding-left: 5px; gap: 3.500px; position: relative; color: #111; }
.pr svg { width: 13.500px; height: 12px; }
.vp-c .pr { height: 22.600px; padding-left: 7px; gap: 4px; }
.vp-c .pr svg { width: 17px; height: 15px; }
.vp .cur { background: #8a8a8a; border: 1px solid #6fa8e4; color: #fff; height: 16px; margin: -.5px 0 0 1px; padding-left: 3px; }
.vp-c .cur { height: 21px; margin: -1px 0 0 2px; padding-left: 4px; border-width: 1.500px; }
.more::after { content: ""; position: absolute; right: 2px; bottom: 1px; border: 2.500px solid #222; border-left-color: transparent; border-top-color: transparent; }
.vp-c .more::after { border-width: 3px; right: 3px; bottom: 0; }
.vp .cur::after { right: 0; bottom: 0; }
.up { margin: 3.500px auto 4.700px; width: 6px; border: 3px solid transparent; border-top: 0; border-bottom: 5px solid #888; }
.vp-c .up { margin: 5px auto 5px; width: 8px; border-width: 0 4px 6px; }
.fl { font: 6.500px "Liberation Sans", sans-serif; }
.st { font: bold 10px "Liberation Sans", sans-serif; }

/* export dialog */
.dialog { position: absolute; left: 489px; top: 229px; width: 402px; height: 299px; background: #4dbbcb; border: 1px solid #4794a0; padding: 0 4px 4px; font: 8.100px "DejaVu Sans Condensed", "DejaVu Sans", sans-serif; font-stretch: condensed; letter-spacing: -.28px; color: #111; white-space: nowrap; }
.dialog u { text-underline-offset: 1px; text-decoration-thickness: .7px; }
.dialog header { display: flex; align-items: center; height: 20px; padding-left: 6px; gap: 4px; font: 8.600px "Open Sans", sans-serif; letter-spacing: -.2px; }
.d-name { padding-top: 1px; }
.dialog header b { margin-left: auto; width: 23px; height: 20px; background: #c0554e; border: 1px solid #8b4440; border-top: 0; line-height: 17px; text-align: center; font-size: 10px; }
.dbody { background: #f0f0f0; height: 273px; padding: 9px 8px 0; }
.fs { border: 1px solid #c0c0c0; box-shadow: inset 1px 1px #fff, 1px 1px #fff; }
.lg { display: block; width: max-content; margin: -5px 0 0 2px; padding: 0 2px; line-height: 11px; height: 10px; background: #f0f0f0; }
.f1 { height: 42px; } .f1 p { margin: 8.500px 0 0 8.500px; line-height: 9.700px; letter-spacing: -.36px; }
.out { display: flex; align-items: center; margin: 8.500px -1px 0 -2px; height: 16px; }
.out > span { width: 46.500px; letter-spacing: -.2px; }
.inp { height: 16px; width: 309px; border: 1px solid #888; background: #fff; padding: 0 3px 0 2px; display: flex; align-items: center; justify-content: space-between; }
.dots { margin-left: auto; width: 21px; height: 15px; background: #cce5f8; border: 1px dashed #2c79c0; text-align: center; line-height: 11px; letter-spacing: .2px; }
.f2 { margin-top: 7px; height: 107px; }
.ck { display: flex; align-items: center; height: 18.550px; padding-left: 12px; gap: 2px; }
.lg + .ck { margin-top: 2.500px; }
.ck i { width: 9px; height: 9px; border: 1px solid #777; background: #fff; }
.ck.in { padding-left: 29px; }
.sel { display: flex; align-items: center; justify-content: space-between; height: 15px; border: 1px solid #bbb; background: #fbfbfb; color: #888; padding: 0 3px 0 2px; }
.s1 { width: 84px; margin-left: 2px; } .s2 { width: 89px; margin-left: 1px; }
.f3 { margin-top: 9.500px; height: 43px; }
.rd { display: flex; align-items: center; height: 16px; padding-left: 12px; gap: 2px; }
.lg + .rd { margin-top: 1.500px; }
.btns { display: flex; justify-content: flex-end; gap: 5px; margin: 11px 0 0; }
.btns div { width: 50.500px; height: 14px; border: 1px solid #999; background: #e2e2e2; text-align: center; line-height: 13px; }
```
